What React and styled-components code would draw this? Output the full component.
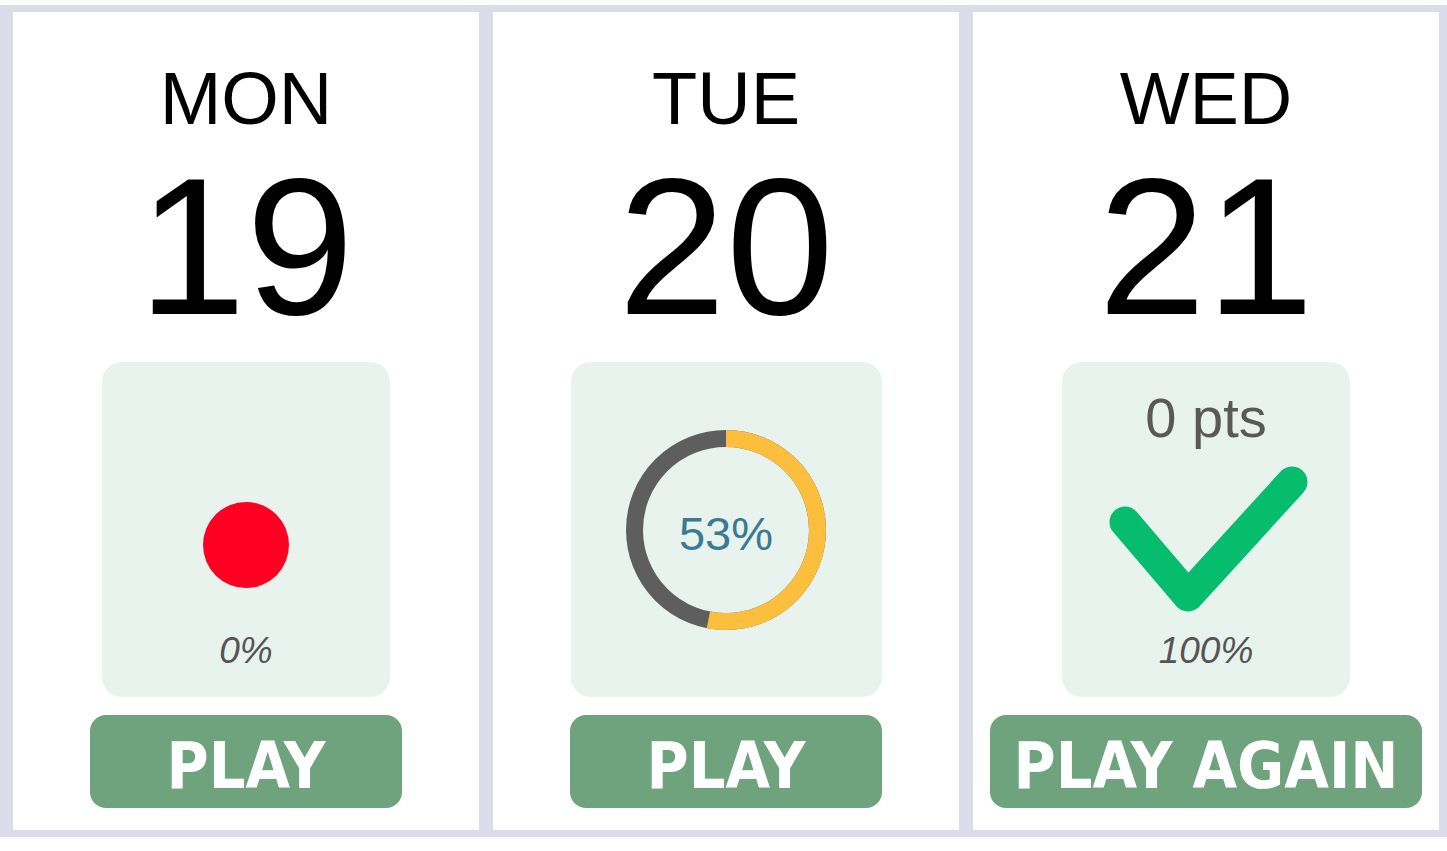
import React from "react"
import styled, { createGlobalStyle } from "styled-components"

const GlobalStyle = createGlobalStyle`
  html, body {
    margin: 0;
    padding: 0;
    background: #ffffff;
  }
  body {
    font-family: "Liberation Sans", Arial, sans-serif;
  }
`

const Board = styled.div`
  margin-top: 5px;
  width: 1447px;
  box-sizing: border-box;
  padding: 7px 8px 7px 13px;
  background: #dcdbea;
  display: flex;
  gap: 14px;
`

const Card = styled.section`
  width: 466px;
  height: 818px;
  background: #ffffff;
  display: flex;
  flex-direction: column;
  align-items: center;
  padding-top: 50px;
  box-sizing: border-box;
`

const Day = styled.div`
  font-size: 74px;
  line-height: 74px;
  color: #000000;
`

const DateNum = styled.div`
  margin-top: 14px;
  font-size: 194px;
  line-height: 194px;
  color: #000000;
`

const Panel = styled.div`
  margin-top: 18px;
  width: ${props => props.width}px;
  height: 335px;
  box-sizing: border-box;
  padding: 28px 0;
  border-radius: 20px;
  background: #e9f3ee;
  display: flex;
  flex-direction: column;
  align-items: center;
  justify-content: center;
`

const TopLabel = styled.div`
  height: 56px;
  font-size: 56px;
  line-height: 56px;
  color: #595959;
`

const Middle = styled.div`
  flex: 1;
  width: 100%;
  display: flex;
  align-items: center;
  justify-content: center;
`

const Percent = styled.div`
  height: 37px;
  padding-top: 3px;
  font-size: 37px;
  line-height: 37px;
  font-style: italic;
  color: #555555;
`

const Dot = styled.div`
  margin-top: 14px;
  width: 86px;
  height: 86px;
  border-radius: 50%;
  background: #ff0022;
`

const RingBox = styled.div`
  position: relative;
  width: 200px;
  height: 200px;
`

const RingLabel = styled.div`
  position: absolute;
  inset: 0;
  display: flex;
  align-items: center;
  justify-content: center;
  padding-top: 8px;
  font-size: 47px;
  color: #3a7a95;
`

const PlayButton = styled.button`
  margin-top: 18px;
  width: ${props => props.width}px;
  height: 93px;
  border: none;
  border-radius: 16px;
  background: #6fa37e;
  color: #ffffff;
  font-family: "DejaVu Sans Condensed", "DejaVu Sans", Verdana, sans-serif;
  font-stretch: condensed;
  font-weight: bold;
  font-size: 64px;
  line-height: 64px;
  padding: 8px 0 0 0;
  display: flex;
  align-items: center;
  justify-content: center;
  cursor: pointer;
`

const Ring = ({ value }) => {
  const r = 91.5
  const c = 2 * Math.PI * r
  return (
    <RingBox>
      <svg width="200" height="200" viewBox="0 0 200 200">
        <circle cx="100" cy="100" r={r} fill="none" stroke="#5e5e5e" strokeWidth="17" />
        <circle
          cx="100"
          cy="100"
          r={r}
          fill="none"
          stroke="#fcbf3d"
          strokeWidth="17"
          strokeDasharray={`${c * value} ${c}`}
          transform="rotate(-90 100 100)"
        />
      </svg>
      <RingLabel>{Math.round(value * 100)}%</RingLabel>
    </RingBox>
  )
}

const Check = () => (
  <svg width="220" height="183" viewBox="0 0 220 183">
    <polyline
      points="29,76 92,150 196,36"
      fill="none"
      stroke="#06bd6e"
      strokeWidth="31"
      strokeLinecap="round"
      strokeLinejoin="round"
    />
  </svg>
)

const App = () => (
  <>
    <GlobalStyle />
    <Board>
      <Card>
        <Day>MON</Day>
        <DateNum>19</DateNum>
        <Panel width={288}>
          <TopLabel />
          <Middle>
            <Dot />
          </Middle>
          <Percent>0%</Percent>
        </Panel>
        <PlayButton width={312}>PLAY</PlayButton>
      </Card>

      <Card>
        <Day>TUE</Day>
        <DateNum>20</DateNum>
        <Panel width={311}>
          <Ring value={0.53} />
        </Panel>
        <PlayButton width={312}>PLAY</PlayButton>
      </Card>

      <Card>
        <Day>WED</Day>
        <DateNum>21</DateNum>
        <Panel width={288}>
          <TopLabel>0 pts</TopLabel>
          <Middle>
            <Check />
          </Middle>
          <Percent>100%</Percent>
        </Panel>
        <PlayButton width={432}>PLAY AGAIN</PlayButton>
      </Card>
    </Board>
  </>
)

export default App
